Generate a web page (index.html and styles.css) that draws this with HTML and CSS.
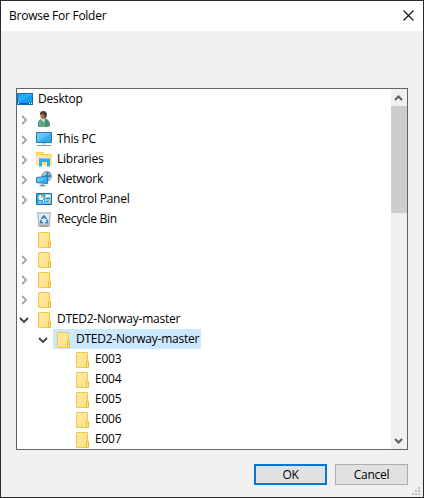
FILE: index.html
```html
<!DOCTYPE html>
<html lang="en">
<head>
<meta charset="utf-8">
<title>Browse For Folder</title>
<link rel="stylesheet" href="styles.css">
</head>
<body>
<svg class="defs" width="0" height="0" aria-hidden="true">
  <defs>
    <linearGradient id="blue" x1="0" y1="0" x2="1" y2="1"><stop offset="0" stop-color="#1aa1ff"/><stop offset=".5" stop-color="#35adff"/><stop offset=".52" stop-color="#119cff"/><stop offset="1" stop-color="#149eff"/></linearGradient>
    <linearGradient id="screen" x1="0" y1="0" x2="1" y2="1"><stop offset="0" stop-color="#75cdfc"/><stop offset=".5" stop-color="#5ac1fb"/><stop offset=".52" stop-color="#38b0f7"/><stop offset="1" stop-color="#2ba5f2"/></linearGradient>
    <linearGradient id="yellow" x1="0" y1="0" x2="1" y2="1"><stop offset="0" stop-color="#ffeaa6"/><stop offset="1" stop-color="#ffe07c"/></linearGradient>
    <symbol id="folder" viewBox="0 0 16 16"><path d="M2.5.5h11v15h-11z" fill="url(#yellow)" stroke="#efc84a"/><path d="M12.5 9.5h2v6h-2z" fill="#ffe58f" stroke="#e9be3d"/></symbol>
    <symbol id="right" viewBox="0 0 10 10"><path d="M3.1 1l4 4-4 4" fill="none" stroke="#a6a6a6" stroke-width="1.9"/></symbol>
    <symbol id="down" viewBox="0 0 10 10"><path d="M1 3l4 4 4-4" fill="none" stroke="#454545" stroke-width="1.9"/></symbol>
  </defs>
</svg>
<div class="dialog">
  <header class="titlebar">
    <h1 class="title">Browse For Folder</h1>
    <svg class="close" width="11" height="11" viewBox="0 0 11 11"><path d="M.5.5l10 10M10.500.5l-10 10" fill="none" stroke="#111" stroke-width="1.15"/></svg>
  </header>
  <main class="box">
    <ul class="tree">
      <li class="row root"><svg class="icon" viewBox="0 0 16 16"><path d="M0 2h16v12H0z" fill="#0f6fb5"/><path d="M1 3h14v9H1z" fill="url(#blue)"/><path d="M1 12h14v1H1z" fill="#0b5c9b"/><path d="M1 12h1v1H1zM12 12h1v1h-1zM14 12h1v1h-1z" fill="#fff"/></svg><span class="label">Desktop</span></li>
      <li class="row"><svg class="chev"><use href="#right"/></svg><svg class="icon" viewBox="0 0 16 16"><path d="M2 16v-3c0-3 1.500-5 4-5.500h3c3 .5 5 3 5 6.500v1.200l-3 .8z" fill="#48906b"/><path d="M2.500 16v-3c0-2 .6-3.600 2-4.500l4.500 4 .5 3.500z" fill="#5cab83"/><path d="M5.500 6.500L5 8.500l3.500 3L9 7z" fill="#e6eee9"/><ellipse cx="7.300" cy="4.500" rx="2.900" ry="3.800" fill="#a87452"/><path d="M4 4C3.500 1.500 5 0 7.300 0c2.500 0 3.900 1.500 3.600 4.200-.2 1.500-.9 2.800-1.900 3.300L8.200 5 7 2.700z" fill="#4d3d35"/></svg><span class="label"></span></li>
      <li class="row"><svg class="chev"><use href="#right"/></svg><svg class="icon" viewBox="0 0 16 16"><path d="M.5 1.500h15v10H.5z" fill="url(#screen)" stroke="#31799f"/><path d="M6 12h4v1.500H6z" fill="#c1d3dd"/><path d="M1 14h14v1H1z" fill="#7d9aab"/></svg><span class="label">This PC</span></li>
      <li class="row"><svg class="chev"><use href="#right"/></svg><svg class="icon" viewBox="0 0 16 16"><path d="M0 1.500L.5 1H7l1 2h7.500l.5.500V14H0z" fill="#f3c84d"/><path d="M1 2h5v1H1z" fill="#fff2bd"/><path d="M0 4h16v10.500H0z" fill="url(#yellow)"/><path d="M3 8l1-1h9l1 1v7.500h-3V11H6v4.500H3z" fill="#34ade5"/><path d="M4 7h9v1H4z" fill="#70cef3"/></svg><span class="label">Libraries</span></li>
      <li class="row"><svg class="chev"><use href="#right"/></svg><svg class="icon" viewBox="0 0 16 16"><circle cx="10.600" cy="5.300" r="5.100" fill="#437da7"/><path d="M7 2l3-1.300 1 1.600-2 2.200-2.500 1zM12 1.500l2.500 2-2 1.300zM11.500 7l3-1.500.5 2-2 2z" fill="#a8c9dc"/><path d="M.5 6.500l11-1v7l-11-.8z" fill="url(#screen)" stroke="#277fb2"/><path d="M5 12.500h2.500v1.800H5z" fill="#9fb6c3"/><path d="M3 14h7l-1 1.300H4z" fill="#638ba4"/></svg><span class="label">Network</span></li>
      <li class="row"><svg class="chev"><use href="#right"/></svg><svg class="icon" viewBox="0 0 16 16"><path d="M.5 2.500h15v11H.5z" fill="#5dc0f4" stroke="#256f9d"/><path d="M1 3h14v9H1z" fill="#8ad5fa"/><path d="M1 3h8v9H1z" fill="#35a4e1"/><circle cx="5" cy="6.500" r="2.600" fill="#fff"/><path d="M5 6.500V3.800A2.700 2.700 0 0 1 7.700 6.500z" fill="#f6a32f"/><path d="M10 4h4v2h-4z" fill="#fff"/><path d="M3 10.500h2v1H3zM7 9h1v2.500H7z" fill="#fff"/><path d="M10 7h4v1h-4zM10 10h2v1h-2z" fill="#2b78aa"/><path d="M12 9.500h2V11h-2z" fill="#f6a32f"/></svg><span class="label">Control Panel</span></li>
      <li class="row"><svg class="icon" viewBox="0 0 16 16"><path d="M1.600 1.500h12.800L13 15.500H3z" fill="#e5e9ec" stroke="#a1a8ad"/><path d="M2 1h12l-1 2H3z" fill="#c7cdd1"/><path d="M3.300 13.500h9.400l-.3 2H3.600z" fill="#9da4aa"/><path d="M5.500 8L8 5l2.500 3M11 8.700l.6 3H8.800M7.300 11.700H4.500l.7-2.700" fill="none" stroke="#287fc4" stroke-width="1.600"/></svg><span class="label">Recycle Bin</span></li>
      <li class="row"><svg class="icon folder"><use href="#folder"/></svg></li>
      <li class="row"><svg class="chev"><use href="#right"/></svg><svg class="icon folder"><use href="#folder"/></svg></li>
      <li class="row"><svg class="chev"><use href="#right"/></svg><svg class="icon folder"><use href="#folder"/></svg></li>
      <li class="row"><svg class="chev"><use href="#right"/></svg><svg class="icon folder"><use href="#folder"/></svg></li>
      <li class="row"><svg class="chev"><use href="#down"/></svg><svg class="icon folder"><use href="#folder"/></svg><span class="label">DTED2-Norway-master</span></li>
      <li class="row child"><svg class="chev"><use href="#down"/></svg><span class="selected"><svg class="icon folder"><use href="#folder"/></svg><span class="label">DTED2-Norway-master</span></span></li>
      <li class="row leaf"><svg class="icon folder"><use href="#folder"/></svg><span class="label">E003</span></li>
      <li class="row leaf"><svg class="icon folder"><use href="#folder"/></svg><span class="label">E004</span></li>
      <li class="row leaf"><svg class="icon folder"><use href="#folder"/></svg><span class="label">E005</span></li>
      <li class="row leaf"><svg class="icon folder"><use href="#folder"/></svg><span class="label">E006</span></li>
      <li class="row leaf"><svg class="icon folder"><use href="#folder"/></svg><span class="label">E007</span></li>
    </ul>
    <div class="scrollbar">
      <svg class="arrow" viewBox="0 0 16 17"><path d="M4 11l3.500-3.500L11 11" fill="none" stroke="#606060" stroke-width="2"/></svg>
      <div class="thumb"></div>
      <svg class="arrow end" viewBox="0 0 16 17"><path d="M4 7l3.500 3.500L11 7" fill="none" stroke="#606060" stroke-width="2"/></svg>
    </div>
  </main>
  <footer class="actions">
    <button class="button primary">OK</button>
    <button class="button">Cancel</button>
  </footer>
  <svg class="grip" width="8" height="8" viewBox="0 0 8 8"><path d="M6 0h2v2H6zM3 3h2v2H3zM6 3h2v2H6zM0 6h2v2H0zM3 6h2v2H3zM6 6h2v2H6z" fill="#bfbfbf"/></svg>
</div>
</body>
</html>
```
FILE: styles.css
```css
* { box-sizing: border-box; }
body { margin: 0; font: 12px/20px "Open Sans", "Noto Sans", sans-serif; color: #000; }
.defs { position: absolute; }
.dialog {
  position: relative;
  display: flex;
  flex-direction: column;
  width: 424px;
  height: 498px;
  background: #f0f0f0;
  border: 1px solid #2b2b2d;
}
.titlebar {
  display: flex;
  align-items: center;
  justify-content: space-between;
  height: 30px;
  padding: 0 9px 0 8px;
  background: #fff;
}
.title { margin: 0; font-size: 12px; font-weight: 400; letter-spacing: -0.25px; }
.close { margin-bottom: 2px; }
.box {
  display: flex;
  width: 392px;
  height: 362px;
  margin: 57px 0 0 15px;
  background: #fff;
  border: 1px solid #646464;
}
.tree { flex: 1; margin: 0; padding: 0; list-style: none; letter-spacing: -0.25px; }
.row { display: flex; align-items: center; height: 20px; padding-left: 19px; }
.root { padding-left: 0; }
.child { padding-left: 38px; }
.leaf { padding-left: 57px; }
.icon { flex: none; width: 16px; height: 16px; }
.folder { margin-top: 1px; }
.chev { flex: none; width: 10px; height: 10px; margin: 1px 7px 0 -17px; }
.label { margin-left: 5px; white-space: nowrap; }
.selected { display: flex; align-items: center; width: 148px; height: 20px; margin-left: -2px; padding-left: 2px; background: #cce8ff; }
.scrollbar { display: flex; flex-direction: column; width: 16px; background: #f0f0f0; }
.arrow { width: 16px; height: 17px; }
.thumb { height: 107px; background: #cdcdcd; }
.end { margin-top: auto; }
.actions { display: flex; gap: 8px; justify-content: flex-end; margin: 14px 15px 0 0; }
.button {
  width: 73px;
  height: 21px;
  padding: 0;
  font: inherit;
  line-height: 17px;
  letter-spacing: -0.25px;
  color: #000;
  background: #e1e1e1;
  border: 1px solid #adadad;
}
.primary { border: 2px solid #0078d7; }
.grip { position: absolute; right: 3px; bottom: 2px; }
```
